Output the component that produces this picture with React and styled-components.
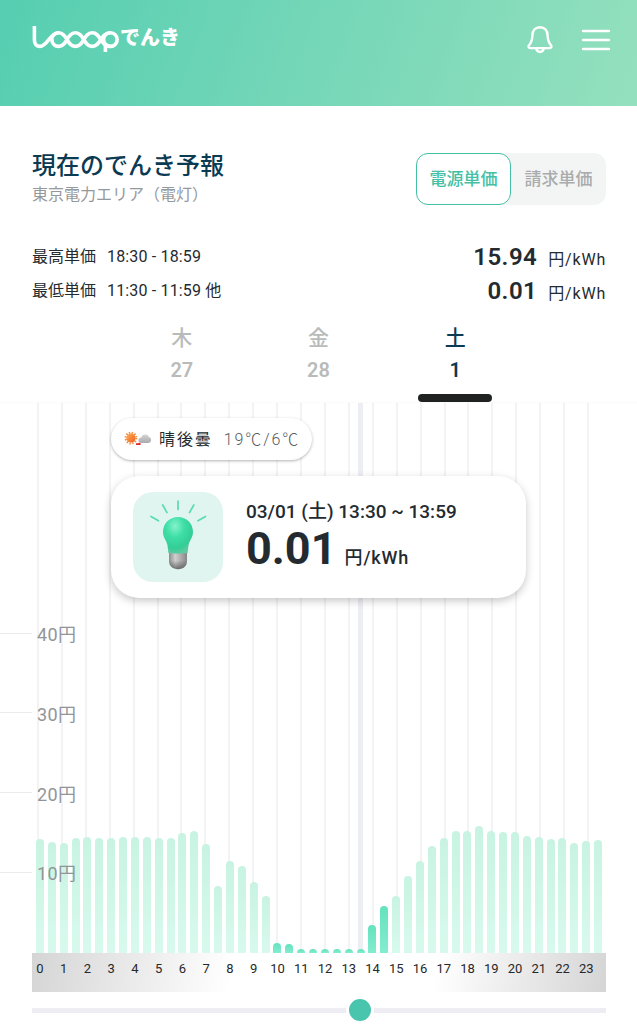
import React, { useState } from "react";
import styled, { createGlobalStyle } from "styled-components";

const GlobalStyle = createGlobalStyle`
  * {
    box-sizing: border-box;
  }
  body {
    margin: 0;
    background: #fff;
    color: #232b30;
    font-family: Roboto, "Noto Sans CJK JP", sans-serif;
  }
  h1, h2, p, dl, dt, dd {
    margin: 0;
    font-weight: inherit;
  }
  button {
    padding: 0;
    border: 0;
    background: none;
    color: inherit;
    font: inherit;
    cursor: pointer;
  }
`;

// price per half hour, 00:00 - 23:59
const prices = [
  14.3, 13.9, 13.8, 14.4, 14.5, 14.4, 14.4, 14.5, 14.5, 14.5, 14.4, 14.4,
  15.1, 15.3, 13.7, 8.4, 11.5, 10.9, 8.9, 7.1, 1.3, 1.1, 0.01, 0.01,
  0.01, 0.01, 0.01, 0.01, 3.5, 5.9, 7.1, 9.7, 11.5, 13.4, 14.4, 15.3,
  15.3, 15.94, 15.3, 15.2, 15.2, 14.7, 14.6, 14.3, 14.4, 13.8, 14, 14.2,
];
const hours = Array.from({ length: 24 }, (_, i) => i);
const days = [
  { name: "木", date: 27 },
  { name: "金", date: 28 },
  { name: "土", date: 1 },
];
const CHEAP = 7;
const CHART_MAX = 69;

const Header = styled.header`
  display: flex;
  justify-content: space-between;
  align-items: flex-start;
  height: 106px;
  padding: 22px 25px 0 32px;
  background: linear-gradient(110deg, #56ceb1, #94e0be);
  color: #fff;
`;
const Logo = styled.a`
  display: flex;
  align-items: center;
  height: 32px;
  color: #fff;
  font-size: 20px;
  font-weight: 900;
  line-height: 32px;
  text-decoration: none;
`;
const HeaderActions = styled.div`
  display: flex;
  gap: 24px;
`;
const IconButton = styled.button`
  display: flex;
  width: 32px;
  height: 36px;
  align-items: center;
  justify-content: center;
`;

const Intro = styled.section`
  display: flex;
  justify-content: space-between;
  align-items: center;
  margin: 43px 31px 31px 32px;
`;
const Title = styled.h1`
  padding-top: 2px;
  color: #0b3a53;
  font-size: 24px;
  font-weight: 500;
  line-height: 30px;
`;
const Area = styled.p`
  color: #96999c;
  font-size: 16px;
  line-height: 28px;
`;
const Toggle = styled.div`
  display: flex;
  border-radius: 12px;
  background: #f3f5f5;
`;
const ToggleButton = styled.button`
  width: 95px;
  height: 52px;
  padding-bottom: 3px;
  border: ${(p) => (p.$active ? "1px solid #45bfa5" : "0")};
  border-radius: 12px;
  background: ${(p) => (p.$active ? "#fff" : "transparent")};
  color: ${(p) => (p.$active ? "#45bfa5" : "#a9abac")};
  font-size: 17px;
  font-weight: 500;
`;

const Summary = styled.dl`
  margin: 0 31px 14px 32px;
`;
const SummaryRow = styled.div`
  display: flex;
  align-items: center;
  height: 34px;
  font-size: 16px;
  line-height: 34px;
`;
const Period = styled.dd`
  flex: 1;
  padding-left: 11px;
  letter-spacing: 0.01em;
`;
const Price = styled.dd`
  font-size: 24px;
  font-weight: 600;
  letter-spacing: 0.02em;
`;
const Unit = styled.span`
  margin-left: ${(p) => (p.$large ? "8px" : "11px")};
  font-size: ${(p) => (p.$large ? "18px" : "16px")};
  font-weight: ${(p) => (p.$large ? 500 : 400)};
  letter-spacing: 0.05em;
  line-height: 1;
`;

const DayTabs = styled.div`
  display: grid;
  grid-template-columns: repeat(3, 1fr);
  max-width: 410px;
  margin: 0 auto;
`;
const DayTab = styled.button`
  display: flex;
  flex-direction: column;
  align-items: center;
  color: ${(p) => (p.$active ? "#0b3a53" : "#b9bbbb")};
  font-size: 21px;
  font-weight: 500;
  line-height: 32px;

  b {
    font-size: 20px;
    font-weight: 600;
  }
  &::after {
    content: "";
    width: 74px;
    height: 8px;
    margin-top: 8px;
    border-radius: 4px;
    background: ${(p) => (p.$active ? "#202222" : "transparent")};
  }
`;

const Chart = styled.section`
  display: grid;
  height: 551px;
  border-top: 1px solid #fafafa;

  > * {
    grid-area: 1 / 1;
    min-width: 0;
  }
`;
const GridLines = styled.div`
  display: grid;
  grid-template-columns: repeat(24, minmax(0, 1fr));
  margin: 0 26px 0 37px;

  span {
    width: 2px;
    background: #f3f3f5;
  }
`;
const Bars = styled.div`
  display: grid;
  grid-template-columns: repeat(48, minmax(0, 1fr));
  margin: 0 33px 0 34px;
`;
const Slot = styled.div`
  display: flex;
  justify-content: center;
  align-items: flex-end;
  background: ${(p) =>
    p.$selected
      ? "linear-gradient(#ededf4, #ededf4) center / 5px 100% no-repeat"
      : "none"};
`;
const Bar = styled.div`
  width: 8px;
  min-height: 4px;
  border-radius: 4px 4px 0 0;
  background: ${(p) =>
    p.$cheap
      ? "linear-gradient(#64e2bd, #84edcf)"
      : "linear-gradient(#c8f3e2, #d8faee)"};
`;
const YAxis = styled.div`
  display: grid;
  grid-template-rows: 1fr repeat(4, ${1000 / CHART_MAX}%) ${500 / CHART_MAX}%;
`;
const YTick = styled.div`
  display: flex;
  align-items: center;
  padding-bottom: 2px;
  color: #919597;
  font-size: 18px;
  letter-spacing: 0.02em;

  &::before {
    content: "";
    width: 32px;
    height: 1px;
    margin-right: 5px;
    background: #ebebee;
  }
`;
const Overlay = styled.div`
  justify-self: center;
  width: 100%;
  max-width: 415px;
  padding-top: 15px;
`;
const Weather = styled.div`
  display: inline-flex;
  align-items: center;
  height: 42px;
  padding: 0 12px 2px;
  border-radius: 21px;
  background: #fff;
  box-shadow: 0 1px 3px rgba(0, 0, 0, 0.3);
  font-size: 16px;
  letter-spacing: 0.12em;

  svg {
    margin-right: 8px;
  }
`;
const Temperature = styled.span`
  margin-left: 11px;
  color: #555b60;
  font-weight: 300;
`;
const Card = styled.div`
  display: flex;
  align-items: center;
  height: 122px;
  margin-top: 16px;
  padding: 0 22px;
  border-radius: 28px;
  background: #fff;
  box-shadow: 0 3px 8px rgba(0, 0, 0, 0.22);
`;
const BulbTile = styled.div`
  width: 90px;
  height: 90px;
  margin-right: 23px;
  border-radius: 20px;
  background: #e0f5ef;
`;
const CardTime = styled.p`
  font-size: 19px;
  font-weight: 500;
  line-height: 24px;
`;
const CardPrice = styled.p`
  font-size: 45px;
  font-weight: 700;
  line-height: 50px;
`;

const XAxis = styled.div`
  display: grid;
  grid-template-columns: repeat(24, minmax(0, 1fr));
  height: 39px;
  margin: 0 31px 0 32px;
  padding: 0 2px;
  background: linear-gradient(
    100deg,
    #d5d5d5,
    #fff 35%,
    #fff 70%,
    #d5d5d5
  );
  color: #26292b;
  font-size: 13px;
  line-height: 32px;
`;
// the label sits under the first half hour of its cell
const Hour = styled.span`
  display: flex;
  justify-content: center;
  width: 50%;
`;
const Slider = styled.input`
  display: block;
  width: calc(100% - 63px);
  height: 28px;
  margin: 4px 31px 0 32px;
  appearance: none;
  background: linear-gradient(#ededf3, #ededf3) center / 100% 5px no-repeat;

  &::-webkit-slider-thumb {
    width: 28px;
    height: 28px;
    border: 3px solid #fff;
    border-radius: 50%;
    background: #49c5ae;
    appearance: none;
  }
`;

const LogoMark = () => (
  <svg
    width="88"
    height="32"
    viewBox="0 0 88 32"
    fill="none"
    stroke="currentColor"
    strokeWidth="3.6"
    aria-hidden="true"
  >
    <path d="M2.400 4v14c0 4 2.200 6.400 5.600 6.400C15.500 24.400 18 10.800 26.600 10.800c8.900 0 7.900 13.600 16.800 13.600s7.900-13.600 16.800-13.600 8 13.600 18.200 13.600" />
    <path d="M26.600 10.800a6.800 6.800 0 0 0 0 13.600c8.900 0 7.900-13.600 16.800-13.600s7.900 13.600 16.800 13.600 8-13.600 18.200-13.600" />
    <circle cx="78.4" cy="17.6" r="6.8" />
    <path d="M73.400 30v-9" />
  </svg>
);

const BellIcon = () => (
  <svg
    width="28"
    height="30"
    viewBox="0 0 28 30"
    fill="none"
    stroke="currentColor"
    strokeWidth="2.4"
    strokeLinecap="round"
    strokeLinejoin="round"
    aria-hidden="true"
  >
    <path d="M14 2.200c-4.800 0-7.600 3.400-7.600 8.200 0 4.800-1.200 7.200-3.400 9.800-1 1.300-.4 2.900 1.200 2.900h19.600c1.600 0 2.200-1.600 1.200-2.900-2.200-2.600-3.400-5-3.400-9.800 0-4.800-2.800-8.200-7.600-8.200z" />
    <path d="M10.200 23.800c.6 2.200 2 3.200 3.800 3.200s3.200-1 3.800-3.200" />
  </svg>
);

const MenuIcon = () => (
  <svg
    width="30"
    height="24"
    viewBox="0 0 30 24"
    stroke="currentColor"
    strokeWidth="2.4"
    strokeLinecap="round"
    aria-hidden="true"
  >
    <path d="M2 3h26M2 12h26M2 21h26" />
  </svg>
);

const WeatherIcon = () => (
  <svg width="28" height="18" viewBox="0 0 28 18" aria-hidden="true">
    <defs>
      <linearGradient id="sun" x1="0" y1="0" x2="1" y2="1">
        <stop offset="0" stopColor="#ffad55" />
        <stop offset="1" stopColor="#ee6120" />
      </linearGradient>
      <linearGradient id="cloud" x1="0" y1="0" x2="0" y2="1">
        <stop offset="0" stopColor="#d4d4d6" />
        <stop offset="1" stopColor="#a9aaad" />
      </linearGradient>
    </defs>
    <circle
      cx="8"
      cy="9"
      r="5.4"
      fill="none"
      stroke="#f58a3c"
      strokeWidth="2"
      strokeDasharray="1.4 1.427"
    />
    <circle cx="8" cy="9" r="4.6" fill="url(#sun)" />
    <path d="M13 14.200h2.600v-.6l2 .6v1.800H13z" fill="#e5262b" />
    <path
      d="M18.400 14a2.800 2.800 0 0 1-.2-5.600 4.200 4.200 0 0 1 7.800-.4 3.100 3.100 0 0 1-.4 6z"
      fill="url(#cloud)"
    />
  </svg>
);

const BulbIcon = () => (
  <svg width="90" height="90" viewBox="0 0 90 90" aria-hidden="true">
    <defs>
      <radialGradient id="glass" cx="0.4" cy="0.25" r="0.75">
        <stop offset="0" stopColor="#86f2cb" />
        <stop offset="0.4" stopColor="#3fdfa7" />
        <stop offset="0.8" stopColor="#34cd97" />
        <stop offset="1" stopColor="#5fc9a0" />
      </radialGradient>
      <linearGradient id="base" x1="0" y1="0" x2="1" y2="0">
        <stop offset="0" stopColor="#8d8d8d" />
        <stop offset="0.35" stopColor="#cfcfcf" />
        <stop offset="1" stopColor="#858585" />
      </linearGradient>
      <linearGradient id="shade" x1="0" y1="0" x2="0" y2="1">
        <stop offset="0.5" stopColor="#555" stopOpacity="0" />
        <stop offset="1" stopColor="#555" stopOpacity="0.8" />
      </linearGradient>
    </defs>
    <path
      d="M45 9v8.500M29.700 13l4.300 7.600M60.800 13l-4.300 7.600M18 24.500l7.500 4.300M72.500 24.500l-7.500 4.300"
      stroke="#5adbb0"
      strokeWidth="1.7"
      strokeLinecap="round"
    />
    <path
      d="M36 60h18v9c0 5-4 8.200-9 8.200s-9-3.200-9-8.200z"
      fill="url(#base)"
    />
    <path
      d="M36 60h18v9c0 5-4 8.200-9 8.200s-9-3.200-9-8.200z"
      fill="url(#shade)"
    />
    <path
      d="M45 25c-8.500 0-15 6.600-15 15 0 5.500 3.600 8.600 4.500 13.500l.9 7.500c6 1 13.200 1 19.200 0l.9-7.500C56.400 48.600 60 45.500 60 40c0-8.400-6.500-15-15-15z"
      fill="url(#glass)"
    />
  </svg>
);

const pad = (n) => String(n).padStart(2, "0");

const slotLabel = (slot) => {
  const hour = pad(Math.floor(slot / 2));
  return slot % 2 ? `${hour}:30 ~ ${hour}:59` : `${hour}:00 ~ ${hour}:29`;
};

const App = () => {
  const [slot, setSlot] = useState(27);
  const [day, setDay] = useState(2);
  const [mode, setMode] = useState("電源単価");

  return (
    <>
      <GlobalStyle />
      <Header>
        <Logo href="#" aria-label="Looopでんき">
          <LogoMark />
          でんき
        </Logo>
        <HeaderActions>
          <IconButton aria-label="お知らせ">
            <BellIcon />
          </IconButton>
          <IconButton aria-label="メニュー">
            <MenuIcon />
          </IconButton>
        </HeaderActions>
      </Header>
      <main>
        <Intro>
          <div>
            <Title>現在のでんき予報</Title>
            <Area>東京電力エリア（電灯）</Area>
          </div>
          <Toggle>
            {["電源単価", "請求単価"].map((name) => (
              <ToggleButton
                key={name}
                $active={mode === name}
                aria-pressed={mode === name}
                onClick={() => setMode(name)}
              >
                {name}
              </ToggleButton>
            ))}
          </Toggle>
        </Intro>
        <Summary>
          <SummaryRow>
            <dt>最高単価</dt>
            <Period>18:30 - 18:59</Period>
            <Price>
              15.94<Unit>円/kWh</Unit>
            </Price>
          </SummaryRow>
          <SummaryRow>
            <dt>最低単価</dt>
            <Period>11:30 - 11:59 他</Period>
            <Price>
              0.01<Unit>円/kWh</Unit>
            </Price>
          </SummaryRow>
        </Summary>
        <DayTabs>
          {days.map(({ name, date }, i) => (
            <DayTab
              key={name}
              $active={day === i}
              aria-pressed={day === i}
              onClick={() => setDay(i)}
            >
              <span>{name}</span>
              <b>{date}</b>
            </DayTab>
          ))}
        </DayTabs>
        <Chart>
          <GridLines>
            {hours.map((hour) => (
              <span key={hour} />
            ))}
          </GridLines>
          <Bars>
            {prices.map((price, i) => (
              <Slot key={i} $selected={i === slot}>
                <Bar
                  $cheap={price < CHEAP}
                  style={{ height: `${(price / CHART_MAX) * 100}%` }}
                />
              </Slot>
            ))}
          </Bars>
          <YAxis>
            <span />
            {[40, 30, 20, 10].map((yen) => (
              <YTick key={yen}>{yen}円</YTick>
            ))}
          </YAxis>
          <Overlay>
            <Weather>
              <WeatherIcon />
              晴後曇
              <Temperature>19℃/6℃</Temperature>
            </Weather>
            <Card>
              <BulbTile>
                <BulbIcon />
              </BulbTile>
              <div>
                <CardTime>03/01 (土) {slotLabel(slot)}</CardTime>
                <CardPrice>
                  {prices[slot].toFixed(2)}
                  <Unit $large>円/kWh</Unit>
                </CardPrice>
              </div>
            </Card>
          </Overlay>
        </Chart>
        <XAxis>
          {hours.map((hour) => (
            <Hour key={hour}>{hour}</Hour>
          ))}
        </XAxis>
        <Slider
          type="range"
          min="0"
          max="47"
          value={slot}
          aria-label="時間帯"
          onChange={(e) => setSlot(Number(e.target.value))}
        />
      </main>
    </>
  );
};

export default App;
